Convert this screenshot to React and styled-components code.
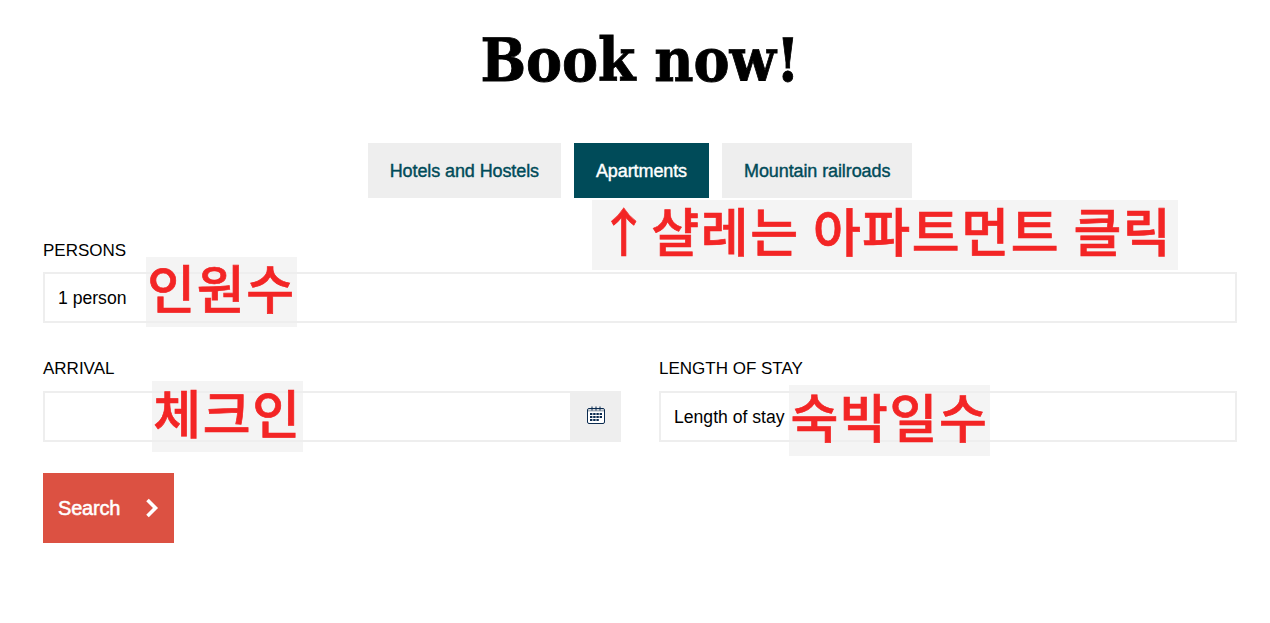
import React from "react";
import styled, { createGlobalStyle } from "styled-components";

const GlobalStyle = createGlobalStyle`
  html, body {
    margin: 0;
    padding: 0;
    background: #fff;
    color: #000;
    font-family: "Liberation Sans", Arial, sans-serif;
  }
`;

const Page = styled.div`
  position: relative;
  height: 623px;
  padding: 0 33px 0 43px;
  box-sizing: border-box;
  overflow: hidden;
`;

const Title = styled.h1`
  margin: 0;
  padding-top: 24px;
  height: 120px;
  box-sizing: border-box;
  text-align: center;
  font-family: "DejaVu Serif", serif;
  font-stretch: condensed;
  font-weight: 700;
  font-size: 60px;
  line-height: 72px;
  -webkit-text-stroke: 0.8px #000;
`;

const Tabs = styled.div`
  display: flex;
  justify-content: center;
  gap: 13px;
  margin-top: 23px;
`;

const Tab = styled.div`
  height: 55px;
  padding: 2px 22px 0;
  box-sizing: border-box;
  display: flex;
  align-items: center;
  font-size: 18px;
  letter-spacing: -0.1px;
  -webkit-text-stroke: 0.4px currentColor;
  background: ${(p) => (p.$active ? "#004b59" : "#eeeeee")};
  color: ${(p) => (p.$active ? "#ffffff" : "#004b59")};
`;

const Field = styled.div`
  display: flex;
  flex-direction: column;
  min-width: 0;
`;

const Label = styled.label`
  font-size: 17px;
  line-height: 20px;
  margin-bottom: 12px;
`;

const InputBox = styled.div`
  display: flex;
  align-items: center;
  height: 51px;
  box-sizing: border-box;
  border: 2px solid #eeeeee;
  padding: 2px 0 0 13px;
  font-size: 17.6px;
`;

const PersonsField = styled(Field)`
  margin-top: 43px;
  ${Label} {
    margin-bottom: 11px;
  }
`;

const Row = styled.div`
  display: grid;
  grid-template-columns: 578px 578px;
  column-gap: 38px;
  margin-top: 36px;
`;

const CalendarButton = styled.div`
  margin: -2px -2px 0 auto;
  width: 51px;
  height: 51px;
  padding-bottom: 3px;
  box-sizing: border-box;
  display: flex;
  align-items: center;
  justify-content: center;
  background: #eeeeee;
`;

const SearchButton = styled.button`
  display: flex;
  align-items: center;
  margin-top: 31px;
  width: 131px;
  height: 70px;
  padding: 0 0 0 15px;
  border: 0;
  background: #dc5142;
  color: #fff;
  font-family: "Liberation Sans", Arial, sans-serif;
  font-size: 20px;
  letter-spacing: -0.2px;
  -webkit-text-stroke: 0.5px #fff;
  svg {
    margin-left: 25px;
  }
`;

const Note = styled.div`
  position: absolute;
  top: ${(p) => p.$top}px;
  left: ${(p) => p.$left}px;
  width: ${(p) => p.$width}px;
  height: ${(p) => p.$height}px;
  padding-bottom: 11px;
  box-sizing: border-box;
  display: flex;
  align-items: center;
  justify-content: center;
  white-space: nowrap;
  background: rgba(238, 238, 238, 0.62);
  color: #f32525;
  font-family: "Noto Sans CJK KR", sans-serif;
  font-weight: 500;
  font-size: 52px;
  letter-spacing: 1.6px;
  -webkit-text-stroke: 0.7px #f32525;
`;

const CalendarIcon = () => (
  <svg width="18" height="18" viewBox="0 0 18 18" fill="none">
    <rect x="0.5" y="2.5" width="17" height="15" rx="1.5" fill="#fff" stroke="#0b2b4f" />
    <path d="M1 4.5h16" stroke="#a9b3bd" strokeWidth="2" />
    <path d="M5 0.5v4M9 0.5v4M13 0.5v4" stroke="#0b2b4f" />
    <path
      d="M3 8h2.4M6.2 8h2.4M9.4 8h2.4M12.6 8h2.4M3 11h2.4M6.2 11h2.4M9.4 11h2.4M12.6 11h2.4M3 14h2.4M6.2 14h2.4M9.4 14h2.4"
      stroke="#0b2b4f"
      strokeWidth="2"
    />
  </svg>
);

const ChevronIcon = () => (
  <svg width="14" height="20" viewBox="0 0 14 20" fill="none">
    <path d="M2.5 2l8 8-8 8" stroke="#fff" strokeWidth="3.6" />
  </svg>
);

const App = () => (
  <Page>
    <GlobalStyle />
    <Title>Book now!</Title>
    <Tabs>
      <Tab>Hotels and Hostels</Tab>
      <Tab $active>Apartments</Tab>
      <Tab>Mountain railroads</Tab>
    </Tabs>
    <PersonsField>
      <Label>PERSONS</Label>
      <InputBox>1 person</InputBox>
    </PersonsField>
    <Row>
      <Field>
        <Label>ARRIVAL</Label>
        <InputBox>
          <CalendarButton>
            <CalendarIcon />
          </CalendarButton>
        </InputBox>
      </Field>
      <Field>
        <Label>LENGTH OF STAY</Label>
        <InputBox>Length of stay</InputBox>
      </Field>
    </Row>
    <SearchButton>
      Search
      <ChevronIcon />
    </SearchButton>
    <Note $top={200} $left={592} $width={586} $height={70}>
      ↑샬레는 아파트먼트 클릭
    </Note>
    <Note $top={257} $left={146} $width={151} $height={70}>
      인원수
    </Note>
    <Note $top={381} $left={152} $width={151} $height={71}>
      체크인
    </Note>
    <Note $top={385} $left={789} $width={201} $height={71}>
      숙박일수
    </Note>
  </Page>
);

export default App;
